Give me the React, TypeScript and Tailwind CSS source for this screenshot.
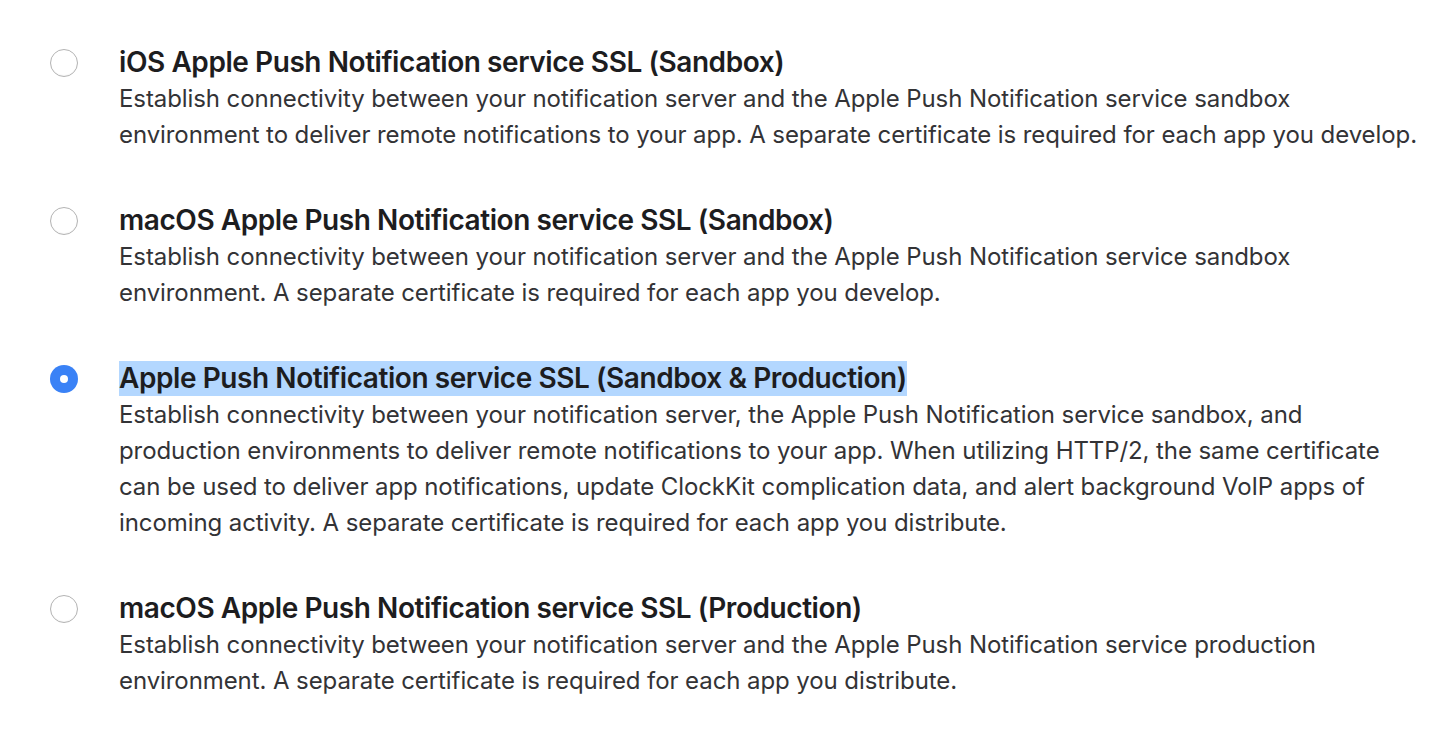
import React from "react";

const items = [
  {
    title: "iOS Apple Push Notification service SSL (Sandbox)",
    body: [
      "Establish connectivity between your notification server and the Apple Push Notification service sandbox",
      "environment to deliver remote notifications to your app. A separate certificate is required for each app you develop.",
    ],
    selected: false,
  },
  {
    title: "macOS Apple Push Notification service SSL (Sandbox)",
    body: [
      "Establish connectivity between your notification server and the Apple Push Notification service sandbox",
      "environment. A separate certificate is required for each app you develop.",
    ],
    selected: false,
  },
  {
    title: "Apple Push Notification service SSL (Sandbox & Production)",
    body: [
      "Establish connectivity between your notification server, the Apple Push Notification service sandbox, and",
      "production environments to deliver remote notifications to your app. When utilizing HTTP/2, the same certificate",
      "can be used to deliver app notifications, update ClockKit complication data, and alert background VoIP apps of",
      "incoming activity. A separate certificate is required for each app you distribute.",
    ],
    selected: true,
  },
  {
    title: "macOS Apple Push Notification service SSL (Production)",
    body: [
      "Establish connectivity between your notification server and the Apple Push Notification service production",
      "environment. A separate certificate is required for each app you distribute.",
    ],
    selected: false,
  },
];

function Radio({ selected }: { selected: boolean }) {
  if (selected) {
    return (
      <div className="w-[28px] h-[28px] rounded-full bg-[#3a82f6] flex items-center justify-center">
        <div className="w-[8px] h-[8px] rounded-full bg-white" />
      </div>
    );
  }
  return (
    <div className="w-[28px] h-[28px] rounded-full border border-[#b3b3b3] bg-white shadow-[inset_0_-1px_1px_rgba(0,0,0,0.04)]" />
  );
}

export default function App() {
  return (
    <div
      className="w-[1450px] h-[742px] bg-white pt-[44px] flex flex-col gap-[49px]"
      style={{ fontFamily: "Inter, 'Noto Sans', sans-serif" }}
    >
      {items.map((it, i) => (
        <div key={i} className="flex">
          <div className="w-[119px] shrink-0 flex justify-start pl-[50px] pt-[5px]">
            <Radio selected={it.selected} />
          </div>
          <div className="flex flex-col">
            <div className="h-[37px] flex items-center">
              <span
                className={
                  "text-[28px] font-semibold text-[#1d1d1f] leading-[35px] tracking-[-0.43px] " +
                  (it.selected ? "bg-[#b3d7ff]" : "")
                }
              >
                {it.title}
              </span>
            </div>
            {it.body.map((l, j) => (
              <div key={j} className="text-[24px] leading-[36px] tracking-[-0.085px] text-[#333336] whitespace-nowrap">
                {l}
              </div>
            ))}
          </div>
        </div>
      ))}
    </div>
  );
}
